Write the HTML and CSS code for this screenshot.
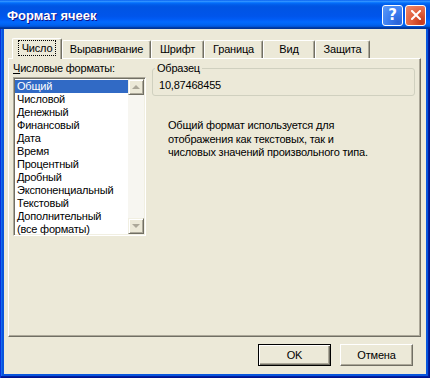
FILE: index.html
```html
<!DOCTYPE html>
<html lang="ru">
<head>
    <meta charset="UTF-8">
    <title>Формат ячеек</title>
    <link rel="stylesheet" href="styles.css">
</head>
<body>
    <div class="window">
        <div class="titlebar">
            <span class="title">Формат ячеек</span>
            <div class="caption-buttons">
                <button class="cap cap-help">?</button>
                <button class="cap cap-close">
                    <svg viewBox="0 0 10 10" width="10" height="10">
                        <path d="M1 1 9 9M9 1 1 9" stroke="#fff" stroke-width="2" stroke-linecap="square"/>
                    </svg>
                </button>
            </div>
        </div>

        <div class="frame">
            <div class="client">
                <div class="tabs">
                    <div class="tab tab-active"><span class="focus">Число</span></div>
                    <div class="tab tab-align">Выравнивание</div>
                    <div class="tab tab-font">Шрифт</div>
                    <div class="tab tab-border">Граница</div>
                    <div class="tab tab-view">Вид</div>
                    <div class="tab tab-protect">Защита</div>
                </div>

                <div class="panel">
                    <div class="formats">
                        <div class="label"><u>Ч</u>исловые форматы:</div>
                        <div class="listbox">
                            <ul class="list">
                                <li class="selected">Общий</li>
                                <li>Числовой</li>
                                <li>Денежный</li>
                                <li>Финансовый</li>
                                <li>Дата</li>
                                <li>Время</li>
                                <li>Процентный</li>
                                <li>Дробный</li>
                                <li>Экспоненциальный</li>
                                <li>Текстовый</li>
                                <li>Дополнительный</li>
                                <li>(все форматы)</li>
                            </ul>
                            <div class="scrollbar">
                                <div class="scroll-btn"><span class="arrow-up"></span></div>
                                <div class="scroll-track"></div>
                                <div class="scroll-btn"><span class="arrow-down"></span></div>
                            </div>
                        </div>
                    </div>

                    <div class="details">
                        <fieldset class="sample">
                            <legend>Образец</legend>
                            <div class="sample-value">10,87468455</div>
                        </fieldset>
                        <p class="description">
                            Общий формат используется для<br>
                            отображения как текстовых, так и<br>
                            числовых значений произвольного типа.
                        </p>
                    </div>
                </div>

                <div class="actions">
                    <button class="button button-default">OK</button>
                    <button class="button">Отмена</button>
                </div>
            </div>
        </div>
    </div>
</body>
</html>
```

FILE: styles.css
```css
:root {
    --face: #ece9d8;
    --light: #ffffff;
    --shadow: #aca899;
    --dark-shadow: #716f64;
    --select: #316ac5;
}

* {
    margin: 0;
    padding: 0;
    box-sizing: border-box;
}

body {
    font-family: "Liberation Sans", Arial, sans-serif;
    font-size: 11px;
    letter-spacing: -0.2px;
    color: #000;
    background: #fff;
}

.window {
    width: 430px;
    height: 378px;
    display: flex;
    flex-direction: column;
}

/* title bar */

.titlebar {
    height: 29px;
    flex: none;
    display: flex;
    align-items: center;
    justify-content: space-between;
    padding: 0 4px 0 7px;
    background: linear-gradient(to bottom,
        #0058ee 0%, #3593ff 4%, #288eff 6%, #127dff 8%, #036ffc 10%,
        #0262ee 14%, #0057e5 20%, #0054e3 24%, #0055eb 56%, #005bf5 66%,
        #026afe 76%, #0062ef 86%, #0052d6 92%, #0040ab 94%, #003092 100%);
}

.title {
    font-weight: bold;
    font-size: 13px;
    letter-spacing: 0;
    color: #fff;
    text-shadow: 1px 1px #0f1089;
    margin-top: 1px;
}

.caption-buttons {
    display: flex;
    gap: 2px;
    margin-top: 1px;
}

.cap {
    width: 21px;
    height: 21px;
    border: 1px solid #fff;
    border-radius: 3px;
    display: flex;
    align-items: center;
    justify-content: center;
    color: #fff;
    font-family: "DejaVu Sans", sans-serif;
    font-weight: bold;
    font-size: 15px;
}

.cap-help {
    background: radial-gradient(circle at 80% 85%, #2a63d8 0%, #3b7df0 45%, #5d9bf8 100%);
}

.cap-close {
    background: radial-gradient(circle at 80% 85%, #c6391a 0%, #e1603d 45%, #ee8a6c 100%);
}

/* frame and client area */

.frame {
    flex: 1;
    display: flex;
    padding: 0 4px 4px;
    background: #0855dd;
    box-shadow: inset 1px 0 #0831d9, inset -1px -1px #00138c, inset -2px -2px #001ea0, inset 2px 0 #166aee;
}

.client {
    flex: 1;
    display: flex;
    flex-direction: column;
    background: var(--face);
    padding: 9px 0 8px;
}

/* tabs */

.tabs {
    display: flex;
    align-items: flex-end;
    height: 20px;
    padding-left: 8px;
    position: relative;
    z-index: 1;
}

.tab {
    height: 18px;
    display: flex;
    align-items: center;
    justify-content: center;
    border-top: 1px solid var(--light);
    border-left: 1px solid var(--light);
    border-right: 1px solid var(--dark-shadow);
    border-top-left-radius: 2px;
    border-top-right-radius: 2px;
    box-shadow: inset -1px 0 var(--shadow);
    background: var(--face);
    padding-bottom: 1px;
}

.tab-active {
    width: 50px;
    height: 21px;
    margin-bottom: -1px;
    padding-bottom: 2px;
}

.focus {
    outline: 1px dotted #000;
    outline-offset: 1px;
    padding: 0 2px;
}

.tab-align { width: 89px; }
.tab-font { width: 53px; }
.tab-border { width: 59px; }
.tab-view { width: 52px; }
.tab-protect { width: 55px; }

/* tab page */

.panel {
    height: 279px;
    flex: none;
    margin: 0 5px 0 4px;
    display: flex;
    gap: 6px;
    padding: 3px 5px 0 4px;
    border-top: 1px solid var(--light);
    border-left: 1px solid var(--light);
    border-right: 1px solid var(--dark-shadow);
    border-bottom: 1px solid var(--dark-shadow);
    box-shadow: inset -1px -1px var(--shadow);
}

.formats {
    width: 133px;
    flex: none;
}

.label {
    line-height: 13px;
    margin-bottom: 2px;
}

.listbox {
    height: 159px;
    display: flex;
    background: #fff;
    border: 1px solid;
    border-color: var(--shadow) var(--light) var(--light) var(--shadow);
    box-shadow: inset 1px 1px var(--dark-shadow), inset -1px -1px #f1efe2;
    padding: 1px;
}

.list {
    list-style: none;
    flex: 1;
    line-height: 13px;
    padding-top: 1px;
}

.list li {
    padding-left: 2px;
    white-space: nowrap;
}

.list .selected {
    background: var(--select);
    color: #fff;
}

.scrollbar {
    width: 16px;
    display: flex;
    flex-direction: column;
    background: #f7f6f1;
}

.scroll-track {
    flex: 1;
}

.scroll-btn {
    height: 16px;
    display: flex;
    align-items: center;
    justify-content: center;
    background: var(--face);
    border: 1px solid;
    border-color: #f1efe2 var(--dark-shadow) var(--dark-shadow) #f1efe2;
    box-shadow: inset 1px 1px #fff, inset -1px -1px var(--shadow);
}

.arrow-up,
.arrow-down {
    width: 0;
    height: 0;
    border-left: 4px solid transparent;
    border-right: 4px solid transparent;
}

.arrow-up {
    border-bottom: 4px solid #aca899;
}

.arrow-down {
    border-top: 4px solid #aca899;
}

/* sample and description */

.details {
    width: 263px;
    flex: none;
}

.sample {
    border: 1px solid #d0d0bf;
    border-radius: 3px;
    padding: 4px 6px 3px;
    min-width: 0;
}

.sample legend {
    padding: 0 2px;
    margin-left: -4px;
    line-height: 13px;
}

.sample-value {
    line-height: 13px;
}

.description {
    margin-top: 23px;
    padding-left: 16px;
    line-height: 13.5px;
}

/* dialog buttons */

.actions {
    display: flex;
    justify-content: flex-end;
    gap: 9px;
    padding-right: 13px;
    margin-top: 7px;
}

.button {
    width: 73px;
    height: 22px;
    font-family: inherit;
    font-size: 11px;
    letter-spacing: inherit;
    background: var(--face);
    border: 1px solid;
    border-color: var(--light) var(--dark-shadow) var(--dark-shadow) var(--light);
    box-shadow: inset -1px -1px var(--shadow);
}

.button-default {
    border: 1px solid #000;
    box-shadow: inset 1px 1px var(--light), inset -1px -1px var(--dark-shadow), inset -2px -2px var(--shadow);
}
```
